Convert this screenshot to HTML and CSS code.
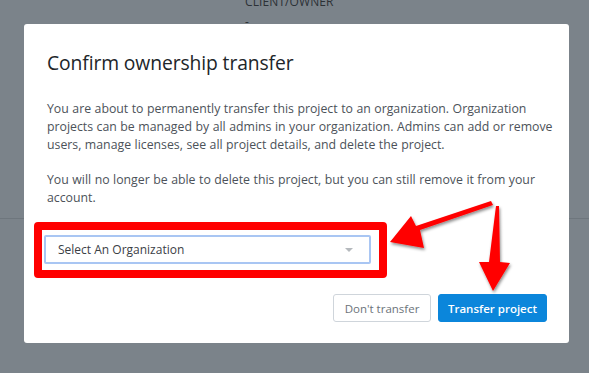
FILE: index.html
```html
<!DOCTYPE html>
<html>
<head>
<meta charset="utf-8">
<link rel="stylesheet" href="styles.css">
</head>
<body>
<div class="page">
  <div class="col-head">CLIENT/OWNER</div>
  <div class="col-dash">-</div>
  <div class="rule"></div>
</div>
<div class="modal">
  <h1 class="title">Confirm ownership transfer</h1>
  <p class="text">You are about to permanently transfer this project to an organization. Organization projects can be managed by all admins in your organization. Admins can add or remove users, manage licenses, see all project details, and delete the project.</p>
  <p class="text">You will no longer be able to delete this project, but you can still remove it from your account.</p>
  <div class="highlight">
    <div class="select">
      <span class="select-label">Select An Organization</span>
      <span class="caret"></span>
    </div>
  </div>
  <div class="actions">
    <button class="btn btn-secondary">Don't transfer</button>
    <button class="btn btn-primary">Transfer project</button>
  </div>
</div>
<svg class="arrows" width="589" height="373" viewBox="0 0 589 373">
  <defs>
    <filter id="sh" x="-20%" y="-20%" width="140%" height="140%">
      <feDropShadow dx="1" dy="2" stdDeviation="1.5" flood-color="#000" flood-opacity="0.45"/>
    </filter>
  </defs>
  <path d="M491 201 L493 205 L420 230 L424 248 L390 242 L411 216 L416 226 Z" fill="#ff0000" filter="url(#sh)"/>
  <path d="M496 206 L499 206 L500 262 L510 263 L493 291 L479 262 L489 262 Z" fill="#ff0000" filter="url(#sh)"/>
</svg>
</body>
</html>
```
FILE: styles.css
```css
* { box-sizing: border-box; }
html, body { margin: 0; padding: 0; }
body {
  width: 589px;
  height: 373px;
  overflow: hidden;
  background: #7b838a;
  font-family: "Open Sans", "Noto Sans", sans-serif;
  position: relative;
}
.page {
  display: flex;
  flex-direction: column;
  align-items: flex-start;
  padding-left: 245px;
}
.col-head {
  font-size: 12px;
  line-height: 12px;
  margin-top: -4px;
  color: #2c3136;
  letter-spacing: 0.1px;
}
.col-dash {
  font-size: 12px;
  line-height: 12px;
  margin-top: 8px;
  color: #2c3136;
}
.rule {
  margin-top: 190px;
  margin-left: -245px;
  width: 589px;
  height: 1px;
  background: #6e767d;
}
.modal {
  position: absolute;
  left: 24px;
  top: 24px;
  width: 545px;
  height: 319px;
  background: #fff;
  border-radius: 3px;
  padding: 0 12px 0 23px;
  display: flex;
  flex-direction: column;
}
.title {
  margin: 25px 0 0;
  font-size: 19.3px;
  font-weight: 400;
  line-height: 28px;
  color: #212529;
  letter-spacing: -0.1px;
}
.text {
  margin: 23px 0 0;
  font-size: 12.3px;
  line-height: 18px;
  color: #4c5259;
  word-spacing: 0.3px;
}
.text + .text {
  margin-top: 17px;
}
.highlight {
  margin: 15px 0 0 -13px;
  width: 353px;
  height: 56px;
  border: 8px solid #ff0000;
  border-radius: 4px;
  padding: 5px 8px 0 2px;
}
.select {
  height: 29px;
  border: 2px solid #a9c6f3;
  border-radius: 2px;
  display: flex;
  align-items: center;
  justify-content: space-between;
  padding: 0 16px 0 12px;
}
.select-label {
  font-size: 12px;
  color: #3b4046;
}
.caret {
  width: 0;
  height: 0;
  border-left: 4px solid transparent;
  border-right: 4px solid transparent;
  border-top: 4px solid #b5b9bd;
}
.actions {
  margin-top: 16px;
  display: flex;
  justify-content: flex-end;
  gap: 7px;
  padding-right: 10px;
}
.btn {
  height: 28px;
  font-family: "Open Sans", "Noto Sans", sans-serif;
  font-size: 11.5px;
  border-radius: 3px;
  padding: 0 4px;
  white-space: nowrap;
  cursor: pointer;
}
.btn-secondary {
  background: #fff;
  border: 1px solid #cfd5db;
  color: #6c737a;
  width: 98px;
}
.btn-primary {
  background: #0b86db;
  border: 1px solid #0b86db;
  color: #fff;
  font-weight: 600;
  width: 109px;
}
.arrows {
  position: absolute;
  left: 0;
  top: 0;
  pointer-events: none;
}
```
